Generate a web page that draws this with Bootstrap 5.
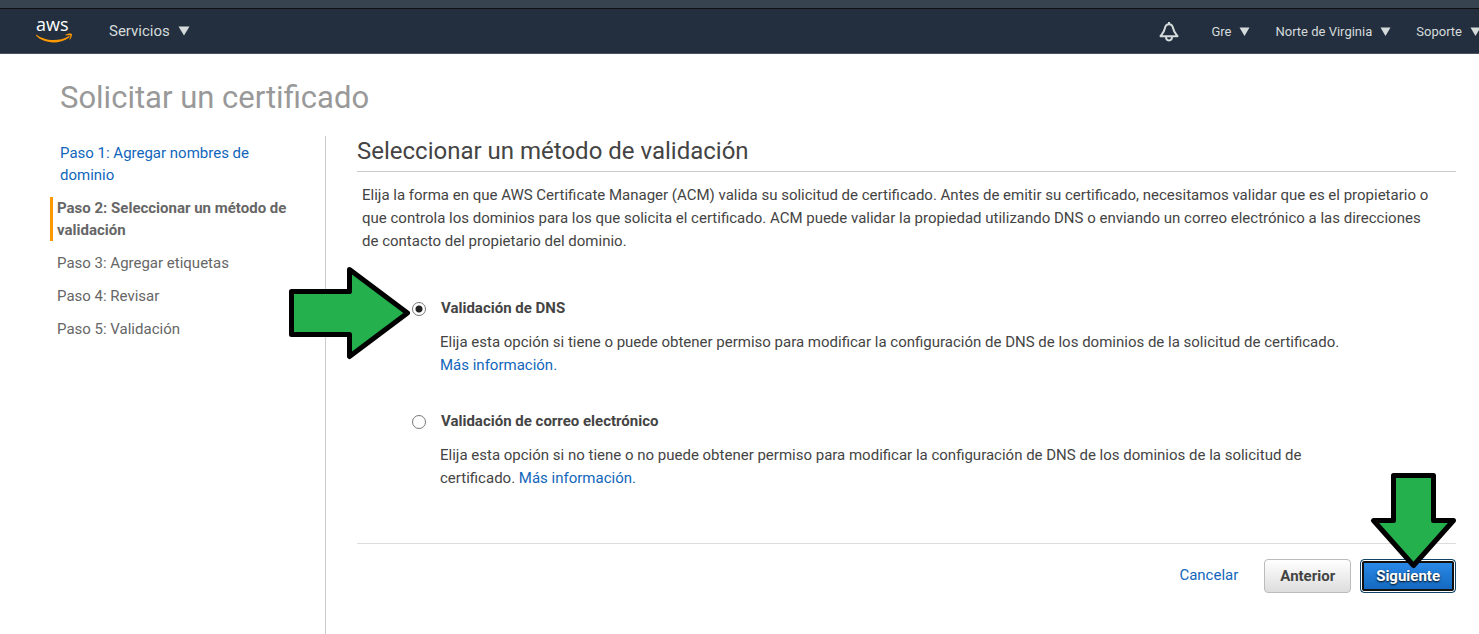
<!DOCTYPE html>
<html lang="es">
<head>
<meta charset="utf-8">
<meta name="viewport" content="width=device-width, initial-scale=1">
<title>Solicitar un certificado</title>
<link rel="stylesheet" href="https://cdn.jsdelivr.net/npm/bootstrap@5.3.0/dist/css/bootstrap.min.css">
<style>
  body { font-family: Roboto, "Liberation Sans", sans-serif; font-size: 15px; line-height: 23px; color: #444; background: #fff; overflow-x: hidden; }
  a { color: #1166bb; text-decoration: none; }
  .top-strip { height: 9px; background: #37444f; border-bottom: 1px solid #111; }
  .console-bar { height: 45px; background: #232f3e; border-bottom: 1px solid #4a5160; padding-left: 36px; overflow: hidden; }
  .console-bar button { color: #d5dbdb; background: none; border: 0; padding: 0; white-space: nowrap; }
  .menu-main { font-size: 15px; margin-left: 33px; gap: 8px; }
  .menu-side { font-size: 13px; gap: 8px; }
  .side-menus { gap: 25px; margin-right: -2px; }
  .bell { margin-right: 7px; }
  .page-title { font-size: 31px; line-height: 40px; font-weight: 400; color: #999; margin: 24px 0 18px 60px; }
  .steps { width: 326px; padding: 6px 36px 0 50px; border-right: 1px solid #ccc; line-height: 22px; color: #666; }
  .steps li { margin-bottom: 11px; padding-left: 7px; }
  .steps .step-done { padding-left: 10px; }
  .steps .step-now { border-left: 3px solid #f90; padding-left: 4px; }
  .work { min-height: 498px; padding: 0 23px 0 31px; min-width: 0; }
  .work h2 { font-size: 24px; line-height: 30px; font-weight: 400; border-bottom: 1px solid #ccc; padding-bottom: 5px; margin-bottom: 12px; }
  .intro { padding: 0 18px 0 5px; margin-bottom: 44px; }
  .option { margin: 0 104px 33px 55px; gap: 14px; }
  .option input { appearance: none; width: 14px; height: 14px; flex: none; margin: 5px 0 0; border: 1px solid #777; border-radius: 50%; background: #fff; }
  .option input:checked { background: radial-gradient(circle, #222 0 3px, #fff 4px); }
  .option label { display: block; padding-left: 1px; margin-bottom: 11px; }
  .option a { white-space: nowrap; }
  .actions { border-top: 1px solid #ddd; margin-top: 53px; padding-top: 15px; gap: 9px; }
  .actions .cancel { margin-right: 17px; padding-bottom: 2px; }
  .action-btn { height: 34px; padding: 0 15px; border: 1px solid #bbb; border-radius: 4px; font-size: 15px; font-weight: 700; line-height: 32px; color: #444; background: linear-gradient(#fff, #ddd); }
  .action-go { border-color: #146; color: #fff; text-shadow: 0 1px 2px #000; background: linear-gradient(#2d8cec, #1166bb); box-shadow: inset 0 0 0 1px #fff, inset 0 0 0 3px #111; }
  .arrow-right { left: -123px; top: -31px; z-index: 2; }
  .arrow-down { right: -1px; bottom: 24px; z-index: 2; }
  .arrow-right, .arrow-down { pointer-events: none; }
</style>
</head>
<body>
<div class="top-strip"></div>
<nav class="console-bar d-flex align-items-center" aria-label="Consola">
  <a href="#" aria-label="aws">
    <svg class="d-block" width="40" height="40" viewBox="0 -6 40 40">
      <text x="0" y="14" font-family="Open Sans, sans-serif" font-weight="500" font-size="18" fill="#fff">aws</text>
      <path d="M0.300 17.500C8 24 23 25 32.500 19.200C33.400 18.700 34 19.600 33.200 20.400C23 28 7 26.500 0 18.600z" fill="#f90"/>
      <path d="M29.500 17.800C32 16 35.400 16.200 35.800 16.900C36.200 17.700 35.500 21.500 33.300 23C34 20.800 34.800 19.200 34.300 18.600C33.800 18 31.500 18.200 29.500 18.500z" fill="#f90"/>
    </svg>
  </a>
  <button type="button" class="menu-main d-flex align-items-center">Servicios
    <svg width="12" height="10" viewBox="0 0 12 10"><path d="M.5.500h11L6 9.500z" fill="#d5dbdb"/></svg></button>
  <div class="side-menus ms-auto d-flex align-items-center">
    <button type="button" class="bell" aria-label="Notificaciones">
      <svg class="d-block" width="20" height="22" viewBox="0 0 20 22" fill="none" stroke="#d5dbdb" stroke-width="2"><path d="M10 4.200C7.500 4.200 6.300 5.800 5.800 8.500C5.200 11.800 3.500 13.500 1.500 16.200H18.500C16.500 13.500 14.800 11.800 14.200 8.500C13.700 5.800 12.500 4.200 10 4.200z" stroke-linejoin="round"/><path d="M10 2v3M7 16.500c0 5.200 6 5.200 6 0"/></svg>
    </button>
    <button type="button" class="menu-side d-flex align-items-center">Gre
      <svg width="11" height="9" viewBox="0 0 11 9"><path d="M.5.500h10l-5 8.500z" fill="#d5dbdb"/></svg></button>
    <button type="button" class="menu-side d-flex align-items-center">Norte de Virginia
      <svg width="11" height="9" viewBox="0 0 11 9"><path d="M.5.500h10l-5 8.500z" fill="#d5dbdb"/></svg></button>
    <button type="button" class="menu-side d-flex align-items-center">Soporte
      <svg width="11" height="9" viewBox="0 0 11 9"><path d="M.5.500h10l-5 8.500z" fill="#d5dbdb"/></svg></button>
  </div>
</nav>
<h1 class="page-title">Solicitar un certificado</h1>
<div class="d-flex">
  <ol class="steps list-unstyled flex-shrink-0 mb-0">
    <li class="step-done"><a href="#">Paso 1: Agregar nombres de dominio</a></li>
    <li class="step-now fw-bold" aria-current="step">Paso 2: Seleccionar un método de validación</li>
    <li>Paso 3: Agregar etiquetas</li>
    <li>Paso 4: Revisar</li>
    <li>Paso 5: Validación</li>
  </ol>
  <main class="work flex-grow-1">
    <h2>Seleccionar un método de validación</h2>
    <p class="intro">Elija la forma en que AWS Certificate Manager (ACM) valida su solicitud de certificado. Antes de emitir su certificado, necesitamos validar que es el propietario o que controla los dominios para los que solicita el certificado. ACM puede validar la propiedad utilizando DNS o enviando un correo electrónico a las direcciones de contacto del propietario del dominio.</p>
    <form>
      <div class="option d-flex position-relative">
        <input type="radio" name="metodo" id="dns" checked>
        <div>
          <label for="dns" class="fw-bold">Validación de DNS</label>
          <p class="mb-0">Elija esta opción si tiene o puede obtener permiso para modificar la configuración de DNS de los dominios de la solicitud de certificado. <a href="#">Más información.</a></p>
        </div>
        <svg class="arrow-right position-absolute" width="122" height="94" viewBox="0 0 122 94"><path d="M2.500 25.500H60.500V3.500L118.500 47L60.500 90.500V68.500H2.500z" fill="#24b14d" stroke="#000" stroke-width="5" stroke-linejoin="round"/></svg>
      </div>
      <div class="option d-flex">
        <input type="radio" name="metodo" id="correo">
        <div>
          <label for="correo" class="fw-bold">Validación de correo electrónico</label>
          <p class="mb-0">Elija esta opción si no tiene o no puede obtener permiso para modificar la configuración de DNS de los dominios de la solicitud de certificado. <a href="#">Más información.</a></p>
        </div>
      </div>
      <div class="actions d-flex justify-content-end align-items-center">
        <a href="#" class="cancel">Cancelar</a>
        <button type="button" class="action-btn">Anterior</button>
        <div class="position-relative">
          <button type="button" class="action-btn action-go d-block">Siguiente</button>
          <svg class="arrow-down position-absolute" width="87" height="96" viewBox="0 0 87 96"><path d="M23.500 2.500H63.500V47.500H83.500L43.500 92.500L3.500 47.500H23.500z" fill="#24b14d" stroke="#000" stroke-width="5" stroke-linejoin="round"/></svg>
        </div>
      </div>
    </form>
  </main>
</div>
<script src="https://cdn.jsdelivr.net/npm/bootstrap@5.3.0/dist/js/bootstrap.bundle.min.js"></script>
</body>
</html>
